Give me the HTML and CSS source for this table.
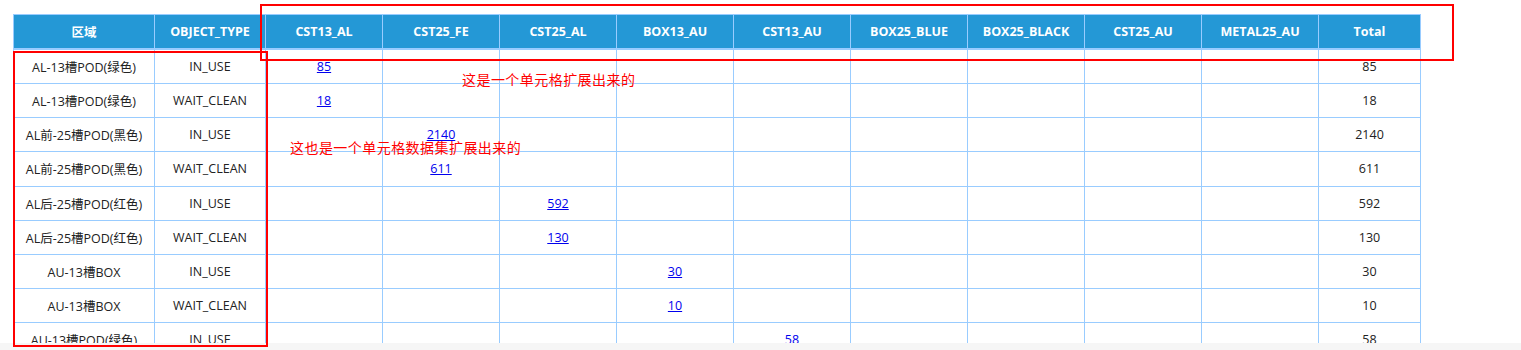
FILE: index.html
```html
<!DOCTYPE html>
<html lang="zh-CN">
<head>
<meta charset="utf-8">
<title>报表</title>
<link rel="stylesheet" href="styles.css">
</head>
<body>
<div class="frame">
  <table class="report">
    <colgroup>
      <col class="c-area"><col class="c-type">
      <col class="c-val"><col class="c-val"><col class="c-val"><col class="c-val"><col class="c-val"><col class="c-val"><col class="c-val"><col class="c-val"><col class="c-val">
      <col class="c-total">
    </colgroup>
    <thead>
      <tr>
        <th>区域</th><th>OBJECT_TYPE</th><th>CST13_AL</th><th>CST25_FE</th><th>CST25_AL</th><th>BOX13_AU</th><th>CST13_AU</th><th>BOX25_BLUE</th><th>BOX25_BLACK</th><th>CST25_AU</th><th>METAL25_AU</th><th>Total</th>
      </tr>
    </thead>
    <tbody>
      <tr><td>AL-13槽POD(绿色)</td><td>IN_USE</td><td><a href="#">85</a></td><td></td><td></td><td></td><td></td><td></td><td></td><td></td><td></td><td>85</td></tr>
      <tr><td>AL-13槽POD(绿色)</td><td>WAIT_CLEAN</td><td><a href="#">18</a></td><td></td><td></td><td></td><td></td><td></td><td></td><td></td><td></td><td>18</td></tr>
      <tr><td>AL前-25槽POD(黑色)</td><td>IN_USE</td><td></td><td><a href="#">2140</a></td><td></td><td></td><td></td><td></td><td></td><td></td><td></td><td>2140</td></tr>
      <tr><td>AL前-25槽POD(黑色)</td><td>WAIT_CLEAN</td><td></td><td><a href="#">611</a></td><td></td><td></td><td></td><td></td><td></td><td></td><td></td><td>611</td></tr>
      <tr><td>AL后-25槽POD(红色)</td><td>IN_USE</td><td></td><td></td><td><a href="#">592</a></td><td></td><td></td><td></td><td></td><td></td><td></td><td>592</td></tr>
      <tr><td>AL后-25槽POD(红色)</td><td>WAIT_CLEAN</td><td></td><td></td><td><a href="#">130</a></td><td></td><td></td><td></td><td></td><td></td><td></td><td>130</td></tr>
      <tr><td>AU-13槽BOX</td><td>IN_USE</td><td></td><td></td><td></td><td><a href="#">30</a></td><td></td><td></td><td></td><td></td><td></td><td>30</td></tr>
      <tr><td>AU-13槽BOX</td><td>WAIT_CLEAN</td><td></td><td></td><td></td><td><a href="#">10</a></td><td></td><td></td><td></td><td></td><td></td><td>10</td></tr>
      <tr><td>AU-13槽POD(绿色)</td><td>IN_USE</td><td></td><td></td><td></td><td></td><td><a href="#">58</a></td><td></td><td></td><td></td><td></td><td>58</td></tr>
      <tr><td>AU-13槽POD(绿色)</td><td>WAIT_CLEAN</td><td></td><td></td><td></td><td></td><td><a href="#">12</a></td><td></td><td></td><td></td><td></td><td>12</td></tr>
    </tbody>
  </table>
</div>
<div class="hscroll"></div>

<div class="mark mark-header"></div>
<div class="mark mark-rows"></div>
<div class="note note-header">这是一个单元格扩展出来的</div>
<div class="note note-rows">这也是一个单元格数据集扩展出来的</div>
</body>
</html>
```

FILE: styles.css
```css
html, body {
  margin: 0;
  padding: 0;
  background: #ffffff;
}

body {
  position: relative;
  width: 1521px;
  height: 350px;
  overflow: hidden;
  font-family: "Open Sans", "Noto Sans CJK SC", sans-serif;
}

.frame {
  height: 343px;
  overflow: hidden;
  padding: 14px 0 0 13px;
  box-sizing: border-box;
}

.hscroll {
  height: 7px;
  background: #f6f6f6;
}

.report {
  border-collapse: collapse;
  table-layout: fixed;
  width: 1408px;
  font-size: 12.5px;
  color: #222222;
}

.c-area { width: 141px; }
.c-type { width: 111px; }
.c-val { width: 117px; }
.c-total { width: 102px; }

.report th,
.report td {
  border: 1px solid #99ccff;
  padding: 0;
  text-align: center;
  vertical-align: middle;
  white-space: nowrap;
  overflow: hidden;
}

.report th {
  height: 33px;
  background: #2498d6;
  color: #ffffff;
  font-weight: 700;
  border-bottom: 2px solid #99ccff;
}

.report td {
  height: 33.125px;
}

.report a {
  color: #0000ee;
  text-decoration: underline;
}

.mark {
  position: absolute;
  border: 2px solid #ff0000;
  box-sizing: border-box;
}

.mark-header {
  left: 260px;
  top: 4px;
  width: 1194px;
  height: 57px;
}

.mark-rows {
  left: 13px;
  top: 51px;
  width: 255px;
  height: 296px;
}

.note {
  position: absolute;
  color: #ff0000;
  font-family: "Noto Sans CJK SC", sans-serif;
  font-size: 14px;
  line-height: 16px;
  letter-spacing: 0.45px;
  white-space: nowrap;
}

.note-header {
  left: 462px;
  top: 71px;
}

.note-rows {
  left: 290px;
  top: 139px;
}
```
